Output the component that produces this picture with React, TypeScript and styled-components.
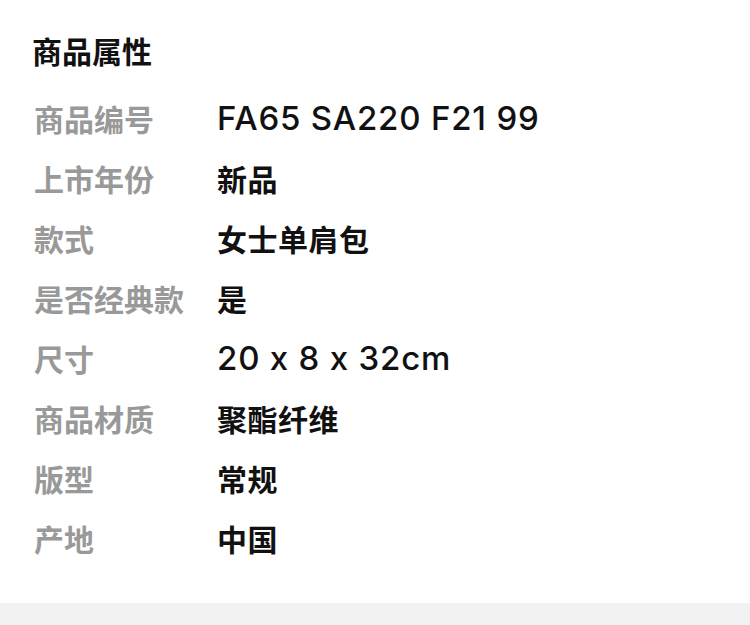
import styled, { createGlobalStyle } from 'styled-components';

const GlobalStyle = createGlobalStyle`
  body {
    margin: 0;
    background: #fff;
    font-family: Inter, "Noto Sans CJK SC", "Noto Sans", sans-serif;
  }
`;

const Page = styled.div`
  background: #fff;
`;

const Section = styled.section`
  padding: 22px 32px 35px 32px;
`;

const Title = styled.h2`
  margin: 0 0 6px 0;
  font-size: 30px;
  line-height: 60px;
  font-weight: 700;
  color: #111;
`;

const Row = styled.div`
  display: flex;
  align-items: center;
  height: 60px;
  font-size: 30px;
  font-weight: 600;
`;

const Label = styled.span`
  flex: 0 0 183px;
  color: #999;
  padding-left: 2px;
`;

const Value = styled.span<{ $latin?: boolean }>`
  color: #111;
  font-size: ${(p) => (p.$latin ? '33px' : '30px')};
  font-weight: ${(p) => (p.$latin ? 500 : 600)};
  letter-spacing: ${(p) => (p.$latin ? '0.8px' : '0.5px')};
`;

const Footer = styled.div`
  height: 30px;
  background: #f2f2f2;
`;

const attrs = [
  { label: '商品编号', value: 'FA65 SA220 F21 99', latin: true },
  { label: '上市年份', value: '新品' },
  { label: '款式', value: '女士单肩包' },
  { label: '是否经典款', value: '是' },
  { label: '尺寸', value: '20 x 8 x 32cm', latin: true },
  { label: '商品材质', value: '聚酯纤维' },
  { label: '版型', value: '常规' },
  { label: '产地', value: '中国' },
];

const App = () => (
  <Page>
    <GlobalStyle />
    <Section>
      <Title>商品属性</Title>
      {attrs.map((a) => (
        <Row key={a.label}>
          <Label>{a.label}</Label>
          <Value $latin={a.latin}>{a.value}</Value>
        </Row>
      ))}
    </Section>
    <Footer />
  </Page>
);

export default App;
